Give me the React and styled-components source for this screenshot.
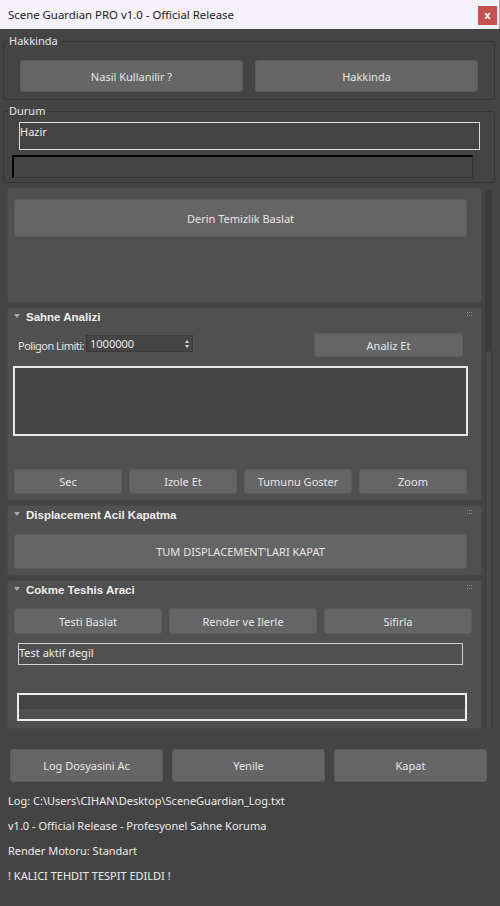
import React from "react";
import styled, { createGlobalStyle } from "styled-components";

const GlobalStyle = createGlobalStyle`
  html, body {
    margin: 0;
    padding: 0;
    background: #444444;
  }
  body {
    font-family: "Noto Sans", "Open Sans", sans-serif;
    font-size: 11px;
    color: #e4e4e4;
  }
  * {
    box-sizing: border-box;
  }
`;

const Window = styled.div`
  width: 500px;
  height: 906px;
  background: #444444;
  display: flex;
  flex-direction: column;
  overflow: hidden;
`;

const TitleBar = styled.div`
  height: 29px;
  flex: none;
  background: #f4f1f9;
  border-right: 1px solid #a8a8a8;
  display: flex;
  align-items: center;
  justify-content: space-between;
  padding: 0 2px 0 8px;
  color: #1b1b1b;
  font-size: 11.4px;
`;

const CloseButton = styled.div`
  width: 19px;
  height: 19px;
  margin-top: 2px;
  background: #c75050;
  color: #ffffff;
  font-family: "DejaVu Sans", sans-serif;
  font-weight: bold;
  font-size: 10px;
  display: flex;
  align-items: center;
  justify-content: center;
`;

const Body = styled.div`
  display: flex;
  flex-direction: column;
  padding: 4px 5px 0 3px;
`;

const GroupBox = styled.fieldset`
  margin: ${(p) => p.$mt || 0}px 0 0 0;
  padding: ${(p) => p.$pad};
  border: 1px solid #363636;
  border-radius: 3px;
  min-width: 0;
`;

const Legend = styled.legend`
  padding: 0 1px;
  margin-left: ${(p) => p.$ml}px;
  font-size: 11px;
  line-height: 16px;
  color: #e4e4e4;
`;

const ButtonRow = styled.div`
  display: flex;
  gap: ${(p) => p.$gap}px;
  margin: ${(p) => p.$margin || 0};

  & > button {
    flex: 1;
    width: auto;
  }
`;

const Button = styled.button`
  flex: none;
  width: ${(p) => (p.$width ? `${p.$width}px` : "100%")};
  height: ${(p) => p.$h}px;
  background: #656565;
  border: 1px solid #5c5c5c;
  border-radius: 3px;
  color: #e6e6e6;
  font-family: inherit;
  font-size: 11px;
  padding: 0;
  margin: ${(p) => p.$margin || 0};
  cursor: pointer;
`;

const StatusBox = styled.div`
  flex: none;
  width: ${(p) => p.$w}px;
  height: ${(p) => p.$h}px;
  margin: ${(p) => p.$margin || 0};
  border: 1px solid ${(p) => p.$border || "#dcdcdc"};
  background: transparent;
  padding: 1px 0 0 0;
  line-height: 15px;
  color: #ececec;
`;

const SunkenBar = styled.div`
  width: 461px;
  height: 23px;
  margin: 5px 0 0 4px;
  background: #444444;
  border-top: 2px solid #000000;
  border-left: 2px solid #000000;
  border-right: 1px solid #333333;
  border-bottom: 1px solid #333333;
`;

const ScrollArea = styled.div`
  display: flex;
  gap: 3px;
  margin: 4px 0 0 4px;
  height: 543px;
  flex: none;
`;

const PanelColumn = styled.div`
  width: 475px;
  display: flex;
  flex-direction: column;
  gap: 4px;
`;

const Panel = styled.div`
  flex: none;
  background: #505050;
  border: 1px solid #484848;
  border-radius: 3px;
  padding: ${(p) => p.$pad};
  display: flex;
  flex-direction: column;
  height: ${(p) => p.$h}px;
`;

const PanelHeader = styled.div`
  height: 20px;
  flex: none;
  display: flex;
  align-items: center;
  margin: -1px -6px 0 0;
`;

const Arrow = styled.span`
  width: 0;
  height: 0;
  border-left: 3px solid transparent;
  border-right: 3px solid transparent;
  border-top: 4px solid #a9a9a9;
  margin-right: 6px;
  margin-top: -2px;
`;

const PanelTitle = styled.span`
  font-family: "Liberation Sans", Arial, sans-serif;
  font-weight: bold;
  font-size: 11.5px;
  color: #eeeeee;
  flex: 1;
`;

const Grip = styled.svg`
  margin-top: -6px;
`;

const ParamRow = styled.div`
  display: flex;
  align-items: center;
  margin: 6px 0 0 0;
`;

const Label = styled.span`
  width: 64px;
  margin-left: 4px;
  margin-right: 4px;
  white-space: nowrap;
  letter-spacing: -0.5px;
`;

const Spinner = styled.div`
  flex: none;
  width: 107px;
  height: 17px;
  background: #454545;
  border: 1px solid #3a3a3a;
  display: flex;
  align-items: center;
  justify-content: space-between;
  padding: 0 3px 0 3px;
  margin-top: -3px;
  color: #ececec;
`;

const SpinArrows = styled.div`
  display: flex;
  flex-direction: column;
  gap: 2px;
`;

const SpinUp = styled.span`
  width: 0;
  height: 0;
  border-left: 2.5px solid transparent;
  border-right: 2.5px solid transparent;
  border-bottom: 3px solid #dddddd;
`;

const SpinDown = styled(SpinUp)`
  border-bottom: none;
  border-top: 3px solid #dddddd;
`;

const ListBox = styled.div`
  flex: none;
  width: 455px;
  height: 70px;
  margin: 9px 0 0 -1px;
  background: #444444;
  border: 2px solid #e8e8e8;
`;

const Progress = styled.div`
  flex: none;
  width: 450px;
  height: 28px;
  margin: ${(p) => p.$margin};
  border: 2px solid #eeeeee;
  background: #505050;
  display: flex;
  flex-direction: column;
`;

const ProgressTrack = styled.div`
  height: 14px;
  background: #444444;
`;

const Scrollbar = styled.div`
  width: 7px;
  height: 540px;
  margin-top: 2px;
  background: #3b3b3b;
  border-radius: 3px;
  display: flex;
  flex-direction: column;
  justify-content: flex-end;
`;

const Thumb = styled.div`
  height: 378px;
  margin: 0 1px;
  background: #4a4a4a;
  border-radius: 3px;
`;

const InfoLines = styled.div`
  display: flex;
  flex-direction: column;
  margin: 6px 0 0 5px;
`;

const InfoLine = styled.div`
  height: 25px;
  line-height: 25px;
  color: #ececec;
`;

const GripIcon = () => (
  <Grip width="6" height="4" viewBox="0 0 6 4">
    {[0, 2, 4].map((x) =>
      [0, 3].map((y) => (
        <rect key={`${x}-${y}`} x={x} y={y} width="1" height="1" fill="#8a8a8a" />
      ))
    )}
  </Grip>
);

const Rollout = ({ title, h, children }) => (
  <Panel $pad="0 14px 6px 6px" $h={h}>
    <PanelHeader>
      <Arrow />
      <PanelTitle>{title}</PanelTitle>
      <GripIcon />
    </PanelHeader>
    {children}
  </Panel>
);

export default function App() {
  return (
    <>
      <GlobalStyle />
      <Window>
        <TitleBar>
          <span>Scene Guardian PRO v1.0 - Official Release</span>
          <CloseButton>x</CloseButton>
        </TitleBar>
        <Body>
          <GroupBox $pad="11px 16px 7px 16px">
            <Legend $ml={-12}>Hakkinda</Legend>
            <ButtonRow $gap={12}>
              <Button $h={32}>Nasil Kullanilir ?</Button>
              <Button $h={32}>Hakkinda</Button>
            </ButtonRow>
          </GroupBox>

          <GroupBox $mt={3} $pad="3px 8px 4px 4px">
            <Legend $ml={0}>Durum</Legend>
            <StatusBox $w={461} $h={28} $margin="0 0 0 11px">
              Hazir
            </StatusBox>
            <SunkenBar />
          </GroupBox>

          <ScrollArea>
            <PanelColumn>
              <Panel $pad="11px 14px 0 6px" $h={116}>
                <Button $h={38}>Derin Temizlik Baslat</Button>
              </Panel>

              <Rollout title="Sahne Analizi" h={194}>
                <ParamRow>
                  <Label>Poligon Limiti:</Label>
                  <Spinner>
                    <span>1000000</span>
                    <SpinArrows>
                      <SpinUp />
                      <SpinDown />
                    </SpinArrows>
                  </Spinner>
                  <Button $h={24} $width={149} $margin="0 0 0 121px">
                    Analiz Et
                  </Button>
                </ParamRow>
                <ListBox />
                <ButtonRow $gap={7} $margin="33px 0 0 0">
                  <Button $h={25}>Sec</Button>
                  <Button $h={25}>Izole Et</Button>
                  <Button $h={25}>Tumunu Goster</Button>
                  <Button $h={25}>Zoom</Button>
                </ButtonRow>
              </Rollout>

              <Rollout title="Displacement Acil Kapatma" h={71}>
                <Button $h={35} $margin="9px 0 0 0">
                  TUM DISPLACEMENT'LARI KAPAT
                </Button>
              </Rollout>

              <Rollout title="Cokme Teshis Araci" h={149}>
                <ButtonRow $gap={7} $margin="8px -5px 0 0">
                  <Button $h={26}>Testi Baslat</Button>
                  <Button $h={26}>Render ve Ilerle</Button>
                  <Button $h={26}>Sifirla</Button>
                </ButtonRow>
                <StatusBox $w={445} $h={22} $border="#d0d0d0" $margin="9px 0 0 4px">
                  Test aktif degil
                </StatusBox>
                <Progress $margin="28px 0 0 3px">
                  <ProgressTrack />
                </Progress>
              </Rollout>
            </PanelColumn>
            <Scrollbar>
              <Thumb />
            </Scrollbar>
          </ScrollArea>

          <ButtonRow $gap={9} $margin="19px 8px 0 7px">
            <Button $h={33}>Log Dosyasini Ac</Button>
            <Button $h={33}>Yenile</Button>
            <Button $h={33}>Kapat</Button>
          </ButtonRow>

          <InfoLines>
            <InfoLine>Log: C:\Users\CIHAN\Desktop\SceneGuardian_Log.txt</InfoLine>
            <InfoLine>v1.0 - Official Release - Profesyonel Sahne Koruma</InfoLine>
            <InfoLine>Render Motoru: Standart</InfoLine>
            <InfoLine>! KALICI TEHDIT TESPIT EDILDI !</InfoLine>
          </InfoLines>
        </Body>
      </Window>
    </>
  );
}
